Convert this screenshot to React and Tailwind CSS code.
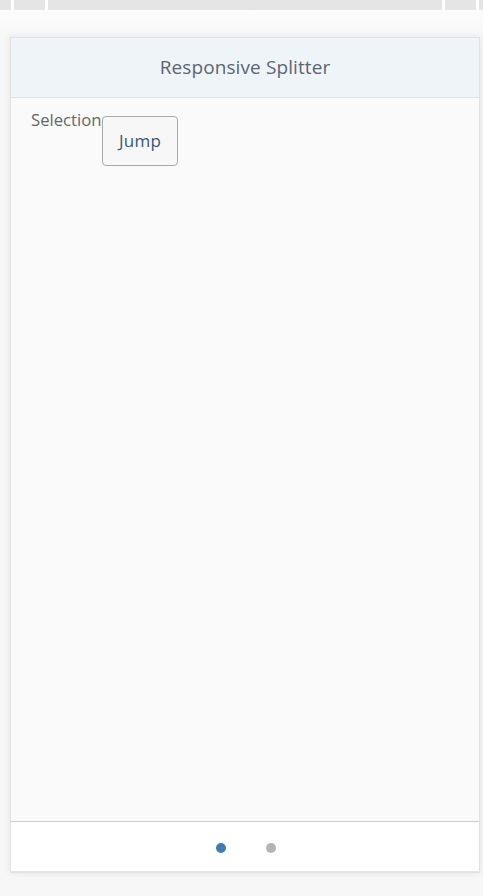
export default function App() {
  return (
    <div className="w-[483px] h-[896px] bg-[#f7f7f7] flex flex-col overflow-hidden" style={{ fontFamily: '"Open Sans", "Liberation Sans", Arial, sans-serif' }}>
      <div className="h-[10px] bg-[#e5e5e5] flex shrink-0">
        <div className="w-[11px]" />
        <div className="w-[3px] bg-white" />
        <div className="w-[31px]" />
        <div className="w-[3px] bg-white" />
        <div className="flex-1" />
        <div className="w-[3px] bg-white" />
        <div className="w-[31px]" />
        <div className="w-[3px] bg-white" />
        <div className="w-[4px]" />
      </div>
      <div className="h-[27px] shrink-0 bg-gradient-to-b from-[#fcfcfc] to-[#f7f7f7]" />
      <div className="ml-[10px] w-[470px] h-[836px] flex flex-col border border-[#e2e2e2] bg-[#fafafa] shadow-[0_0_8px_rgba(0,0,0,0.08)]">
        <div className="h-[60px] shrink-0 bg-[#eff4f9] border-b border-[#d9e4ee] flex items-center justify-center">
          <span className="text-[19px] text-[#5c6670] tracking-[0.1px]">Responsive Splitter</span>
        </div>
        <div className="flex-1 flex items-start pl-[20px] pt-[11px]">
          <span className="text-[16.7px] leading-[21px] text-[#63666a]">Selection</span>
          <button className="mt-[7px] w-[76px] h-[50px] rounded-[4px] border border-[#a8a8a8] bg-[#f7f7f7] text-[17px] text-[#36577a] tracking-[0.2px] pl-[1px]">Jump</button>
        </div>
        <div className="h-[51px] shrink-0 bg-white border-t border-[#cccccc] border-b border-b-[#e5e5e5] flex items-center justify-center gap-[40px] pt-[2px] pl-[2px]">
          <div className="w-[10px] h-[10px] rounded-full bg-[#3f7bb0]" />
          <div className="w-[10px] h-[10px] rounded-full bg-[#b3b3b3]" />
        </div>
      </div>
    </div>
  );
}
